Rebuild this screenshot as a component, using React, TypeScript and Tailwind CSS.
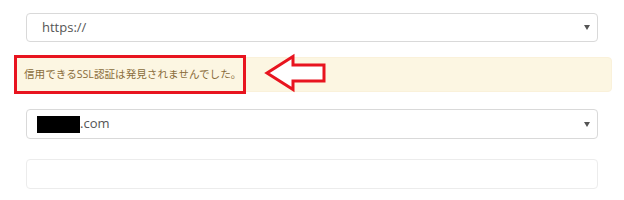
const caret = (
  <svg width="6" height="5" viewBox="0 0 6 5" className="shrink-0">
    <path d="M0 0h6L3 5z" fill="#555" />
  </svg>
)

export default function App() {
  return (
    <div
      className="relative w-[624px] h-[200px] bg-white"
      style={{ fontFamily: '"Open Sans", "Noto Sans CJK JP", sans-serif' }}
    >
      <div className="flex flex-col pt-[13px] px-[12px]">
        <div className="mx-[14px] h-[29px] flex items-center justify-between rounded-[4px] border border-[#d9d9d9] pl-[15px] pr-[7px] text-[13px] text-[#555]">
          <span>https://</span>
          {caret}
        </div>

        <div className="mt-[15px] ml-[2px] h-[35px] flex items-center rounded-[4px] border border-[#faf1da] bg-[#fcf6e2] pl-[9px] text-[10.6px] text-[#8a6d3b]">
          信用できるSSL認証は発見されませんでした。
        </div>

        <div className="mt-[17px] mx-[14px] h-[30px] flex items-center justify-between rounded-[4px] border border-[#d9d9d9] pl-[10px] pr-[7px] text-[13px] text-[#555]">
          <span className="flex items-center">
            <span className="inline-block w-[43px] h-[17px] bg-black" />
            .com
          </span>
          {caret}
        </div>

        <div className="mt-[20px] mx-[14px] h-[30px] rounded-[4px] border border-[#ececec]" />
      </div>

      <div className="absolute left-[14px] top-[55px] w-[232px] h-[39px] border-[3px] border-[#e8141f]" />

      <svg
        className="absolute left-[262px] top-[52px]"
        width="66"
        height="42"
        viewBox="0 0 66 42"
      >
        <path
          d="M5 21 L31 4.5 V13 H62 V29 H31 V37.5 Z"
          fill="#fff"
          stroke="#e8141f"
          strokeWidth="3"
          strokeLinejoin="miter"
        />
      </svg>
    </div>
  )
}
